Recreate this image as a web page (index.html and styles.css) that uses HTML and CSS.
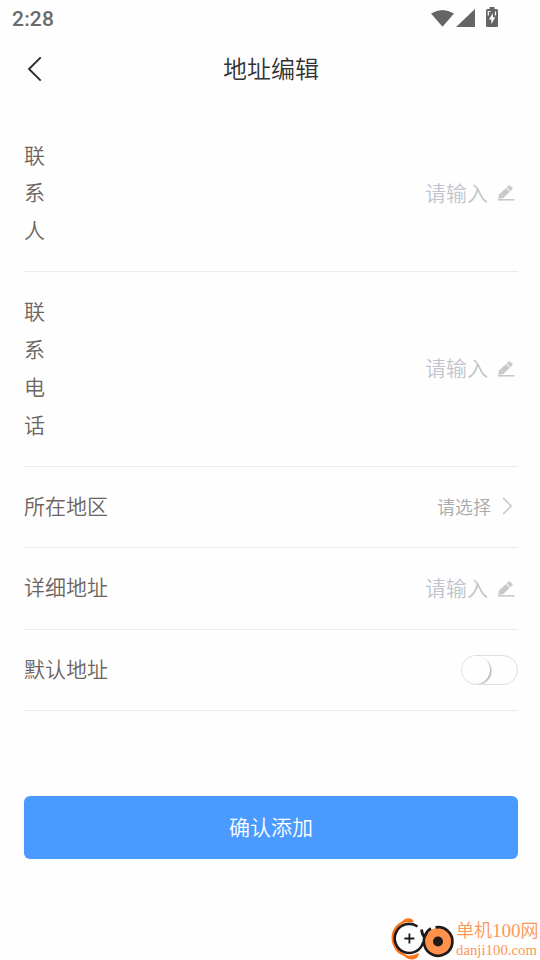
FILE: index.html
```html
<!DOCTYPE html>
<html lang="zh-CN">
<head>
<meta charset="utf-8">
<title>地址编辑</title>
<link rel="stylesheet" href="styles.css">
</head>
<body>
<div class="status">
  <span class="time">2:28</span>
  <svg class="status-icons" width="70" height="22" viewBox="0 0 70 22" fill="#656565">
    <path d="M1 6.800Q12.500-.5 24 6.800L12.500 20Z" transform="translate(0 1.800)"/>
    <path d="M45 3V21H26Z" transform="translate(0 1)"/>
    <path d="M59.500 2H64.500V4H66.500Q68 4 68 5.500V20.500Q68 22 66.500 22H57.500Q56 22 56 20.500V5.500Q56 4 57.500 4H59.500Z"/>
    <path d="M62.800 8L59 14.500H61.400V19L65.300 12.300H62.800Z" fill="#fff"/>
    <path d="M58.300 10.500V6.500H60.500M65.500 6.500V10.500" fill="none" stroke="#fff" stroke-width="1.200"/>
  </svg>
</div>
<header class="header">
  <svg class="back" width="16" height="26" viewBox="0 0 16 26" fill="none" stroke="#2d2d30" stroke-width="1.900"><path d="M13.700 1.300L2 13L13.700 24.700"/></svg>
  <h1>地址编辑</h1>
</header>
<main class="form">
  <div class="row row-three">
    <label class="narrow">联系人</label>
    <span class="hint">请输入</span>
    <svg class="pen" width="18" height="18" viewBox="0 0 18 18" fill="#c9c9c9"><path d="M1.200 15L2.200 10.300L9 3.900L12.800 7.800L6.500 14Z"/><path d="M9.600 3.300L11.800 1.400Q12.400.9 13 1.500L15.500 4.100Q16 4.700 15.400 5.300L13.400 7.200Z"/><path d="M1 15H17.500V16.600H1Z"/></svg>
  </div>
  <div class="row row-four">
    <label class="narrow">联系电话</label>
    <span class="hint">请输入</span>
    <svg class="pen" width="18" height="18" viewBox="0 0 18 18" fill="#c9c9c9"><path d="M1.200 15L2.200 10.300L9 3.900L12.800 7.800L6.500 14Z"/><path d="M9.600 3.300L11.800 1.400Q12.400.9 13 1.500L15.500 4.100Q16 4.700 15.400 5.300L13.400 7.200Z"/><path d="M1 15H17.500V16.600H1Z"/></svg>
  </div>
  <div class="row row-region">
    <label>所在地区</label>
    <span class="choice">请选择</span>
    <svg class="arrow" width="11" height="18" viewBox="0 0 11 18" fill="none" stroke="#c4c4c4" stroke-width="1.500"><path d="M1.200 1L9.200 9L1.200 17"/></svg>
  </div>
  <div class="row row-detail">
    <label>详细地址</label>
    <span class="hint">请输入</span>
    <svg class="pen" width="18" height="18" viewBox="0 0 18 18" fill="#c9c9c9"><path d="M1.200 15L2.200 10.300L9 3.900L12.800 7.800L6.500 14Z"/><path d="M9.600 3.300L11.800 1.400Q12.400.9 13 1.500L15.500 4.100Q16 4.700 15.400 5.300L13.400 7.200Z"/><path d="M1 15H17.500V16.600H1Z"/></svg>
  </div>
  <div class="row row-default">
    <label>默认地址</label>
    <span class="switch"><span class="knob"></span></span>
  </div>
</main>
<button class="submit">确认添加</button>
<div class="brand">
  <svg width="66" height="44" viewBox="0 0 66 44" fill="none">
    <path d="M13 4.500C3 9 .5 20 4 28C7 36 13 39.500 20 39.500C12 35 6 31 6 22C6 13 9 8 16 6Z" fill="#ff7417"/>
    <path d="M11 7Q15 .8 20 1.200Q24.500 1.500 24.500 5.500Q18 4 11 7ZM14 38Q22 40 30 36Q29.500 41.500 24 42.500Q18 42.500 14 38Z" fill="#ff7417"/>
    <path d="M28.500 9.500A14.500 14.500 0 1 0 34.300 25" stroke="#211a1b" stroke-width="2.600"/>
    <path d="M32.500 12.500Q33 17.500 35.500 20" stroke="#211a1b" stroke-width="2.800"/>
    <path d="M20.400 16.500V26.500M15.400 21.500H25.400" stroke="#211a1b" stroke-width="1.800"/>
    <circle cx="49" cy="24.500" r="13.600" fill="#ff914b"/>
    <path d="M46.500 10.400A14.300 14.300 0 1 1 38 15.500" stroke="#211a1b" stroke-width="2.700"/>
    <path d="M42 11.500Q37.500 14 35.500 20" stroke="#211a1b" stroke-width="2.600"/>
    <circle cx="49" cy="24.500" r="5" fill="#211a1b"/>
  </svg>
  <div class="brand-text"><span class="brand-name">单机<span class="digits">100</span>网</span><span class="brand-url">danji100.com</span></div>
</div>
</body>
</html>
```
FILE: styles.css
```css
* { box-sizing: border-box; }
body {
  margin: 0;
  width: 540px;
  height: 960px;
  display: flex;
  flex-direction: column;
  overflow: hidden;
  background: #fefefe;
  font-family: "Noto Sans CJK SC", sans-serif;
  font-weight: 350;
}
.status { height: 38px; display: flex; justify-content: space-between; padding: 5px 40px 0 12px; }
.time { font: 500 21px/28px Roboto, sans-serif; color: #6a6a6a; letter-spacing: .2px; }
.status-icons { display: block; width: 70px; }
.header { height: 60px; display: grid; grid-template-columns: 60px 1fr 60px; align-items: center; padding: 0 0 0 2px; }
.back { margin-left: 25px; margin-top: 2px; }
.header h1 { margin: 0; text-align: center; font-size: 24px; font-weight: 350; color: #333; line-height: 36px; }
.form { margin: 17px 22px 0 24px; }
.row { display: flex; align-items: center; border-bottom: 1px solid #ebebeb; font-size: 21px; line-height: 38px; color: #6d645e; }
.row label { margin-right: auto; padding-bottom: 4px; }
.row .narrow { width: 21px; word-break: break-all; }
.row-three { height: 157px; }
.row-three .narrow { line-height: 37.5px; padding-bottom: 2px; }
.row-four { height: 195px; }
.row-region { height: 81px; }
.row-detail { height: 82px; }
.row-detail label { padding-bottom: 5px; }
.row-default { height: 81px; }
.hint { color: #c0c4cc; padding-bottom: 3px; }
.row-four .hint { padding-bottom: 4px; }
.pen { margin: 0 3px 0 9px; }
.choice { font-size: 18px; color: #aaa; padding-bottom: 2px; }
.arrow { margin: 0 5px 2px 11px; }
.switch { width: 57px; height: 30px; border: 1px solid #dedede; border-radius: 15px; overflow: hidden; }
.knob { display: block; width: 28px; height: 28px; border-radius: 50%; background: #fefefe; box-shadow: 2px 1px 2px -1px #999; }
.submit { margin: 85px 22px 0 24px; padding: 0 0 4px; height: 63px; flex: none; border: 0; border-radius: 6px; background: #4a9aff; color: #fff; font: 350 21px/30px "Noto Sans CJK SC", sans-serif; }
.brand { display: flex; margin: 58px 0 0 389px; height: 43px; white-space: nowrap; }
.brand svg { flex: none; }
.brand-text { display: flex; flex-direction: column; margin-left: 1px; color: #ff9658; font-family: "Liberation Serif", "Noto Sans CJK SC", serif; }
.brand-name { font-size: 18px; line-height: 23px; margin-top: 2px; }
.digits { font-size: 19px; }
.brand-url { font-size: 14.8px; line-height: 16px; margin-top: -1px; }
```
